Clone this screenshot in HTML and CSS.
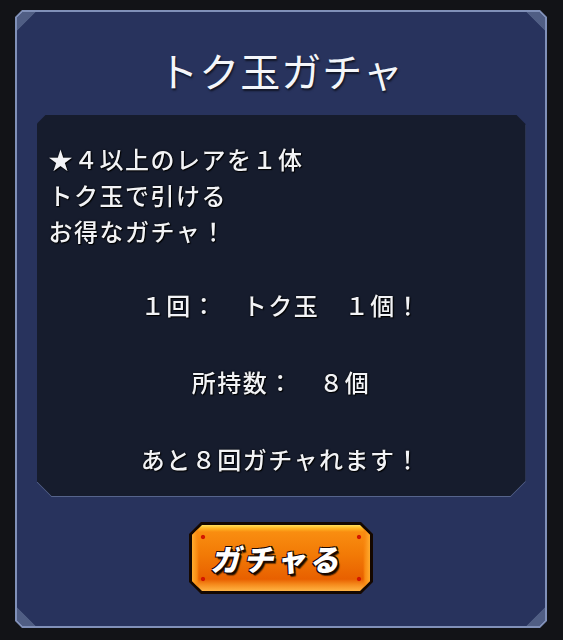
FILE: index.html
```html
<!DOCTYPE html>
<html lang="ja">
<head>
<meta charset="utf-8">
<title>トク玉ガチャ</title>
<link rel="stylesheet" href="styles.css">
</head>
<body>
<div class="frame">
  <div class="panel">
    <h1 class="title">トク玉ガチャ</h1>
    <div class="box-wrap">
      <div class="box">
        <div class="desc">
          <p>★4以上のレアを1体</p>
          <p>トク玉で引ける</p>
          <p>お得なガチャ！</p>
        </div>
        <p class="center first">1回：　トク玉　1個！</p>
        <p class="center">所持数：　8個</p>
        <p class="center">あと8回ガチャれます！</p>
      </div>
    </div>
    <div class="btn">
      <div class="btn-face"><span class="btn-label">ガチャる</span></div>
    </div>
  </div>
</div>
</body>
</html>
```
FILE: styles.css
```css
html, body {
  margin: 0;
  padding: 0;
}
body {
  background: #121317;
  width: 563px;
  height: 640px;
  overflow: hidden;
  font-family: "Noto Sans CJK JP", "Noto Sans", sans-serif;
}
.frame {
  margin: 10px 0 0 15px;
  width: 532px;
  height: 618px;
  box-sizing: border-box;
  padding: 2px;
  background: #8090b8;
  clip-path: polygon(7px 0, calc(100% - 7px) 0, 100% 7px, 100% calc(100% - 7px), calc(100% - 7px) 100%, 7px 100%, 0 calc(100% - 7px), 0 7px);
}
.panel {
  height: 100%;
  box-sizing: border-box;
  background:
    linear-gradient(135deg, #505e84 13px, transparent 13.5px),
    linear-gradient(225deg, #505e84 13px, transparent 13.5px),
    linear-gradient(45deg, #505e84 13px, transparent 13.5px),
    linear-gradient(315deg, #505e84 13px, transparent 13.5px),
    #28335d;
  clip-path: polygon(6px 0, calc(100% - 6px) 0, 100% 6px, 100% calc(100% - 6px), calc(100% - 6px) 100%, 6px 100%, 0 calc(100% - 6px), 0 6px);
  display: flex;
  flex-direction: column;
  align-items: center;
}
.title {
  margin: 0;
  height: 103px;
  box-sizing: border-box;
  padding-top: 14px;
  line-height: 89px;
  font-size: 40px;
  font-weight: 400;
  color: #f4f6fa;
  letter-spacing: 1px;
  text-shadow: 1px 2px 2px rgba(0, 0, 0, 0.6);
}
.box-wrap {
  width: 489px;
  filter: drop-shadow(0 1px 0 #56648c);
}
.box {
  height: 381px;
  box-sizing: border-box;
  background: #161c2d;
  clip-path: polygon(9px 0, calc(100% - 9px) 0, 100% 9px, 100% calc(100% - 15px), calc(100% - 15px) 100%, 15px 100%, 0 calc(100% - 15px), 0 9px);
  padding: 26px 0 0 12px;
  color: #f2f3f6;
  font-size: 24px;
  font-weight: 500;
  letter-spacing: 1.5px;
  font-variant-east-asian: full-width;
  text-shadow: 0 0 2px #000, 1px 1px 1px #000;
}
.box p {
  margin: 0;
  line-height: 36px;
}
.desc {
  margin-bottom: 38px;
}
.box .center {
  text-align: center;
  margin: 0 12px 41px 0;
}
.btn {
  margin-top: 26px;
  width: 184px;
  height: 72px;
  box-sizing: border-box;
  padding: 3px;
  background: #150800;
  clip-path: polygon(12px 0, calc(100% - 12px) 0, 100% 12px, 100% calc(100% - 12px), calc(100% - 12px) 100%, 12px 100%, 0 calc(100% - 12px), 0 12px);
}
.btn-face {
  height: 100%;
  display: flex;
  align-items: center;
  justify-content: center;
  background:
    radial-gradient(circle at 11px 12px, #d21800 1.6px, transparent 2.6px),
    radial-gradient(circle at calc(100% - 11px) 12px, #d21800 1.6px, transparent 2.6px),
    radial-gradient(circle at 11px calc(100% - 12px), #d21800 1.6px, transparent 2.6px),
    radial-gradient(circle at calc(100% - 11px) calc(100% - 12px), #d21800 1.6px, transparent 2.6px),
    linear-gradient(90deg, #ffab2e 0, #f88a12 5px, transparent 7px, transparent calc(100% - 7px), #f88a12 calc(100% - 5px), #ffab2e 100%),
    linear-gradient(180deg, #ffe060 0, #ffb825 3px, #f98d10 7px, #f27a06 45%, #e86000 82%, #f58a1c 90%, #ffb444 100%);
  clip-path: polygon(10px 0, calc(100% - 10px) 0, 100% 10px, 100% calc(100% - 10px), calc(100% - 10px) 100%, 10px 100%, 0 calc(100% - 10px), 0 10px);
}
.btn-label {
  display: inline-block;
  transform: skewX(-12deg);
  color: #ffffff;
  font-size: 30px;
  font-weight: 900;
  letter-spacing: 3px;
  line-height: 1;
  padding-right: 4px;
  text-shadow: 2px 2px 0 #1a0800, -1px -1px 0 #1a0800, 1px -1px 0 #1a0800, -1px 1px 0 #1a0800, 3px 3px 1px rgba(0, 0, 0, 0.6);
}
```
